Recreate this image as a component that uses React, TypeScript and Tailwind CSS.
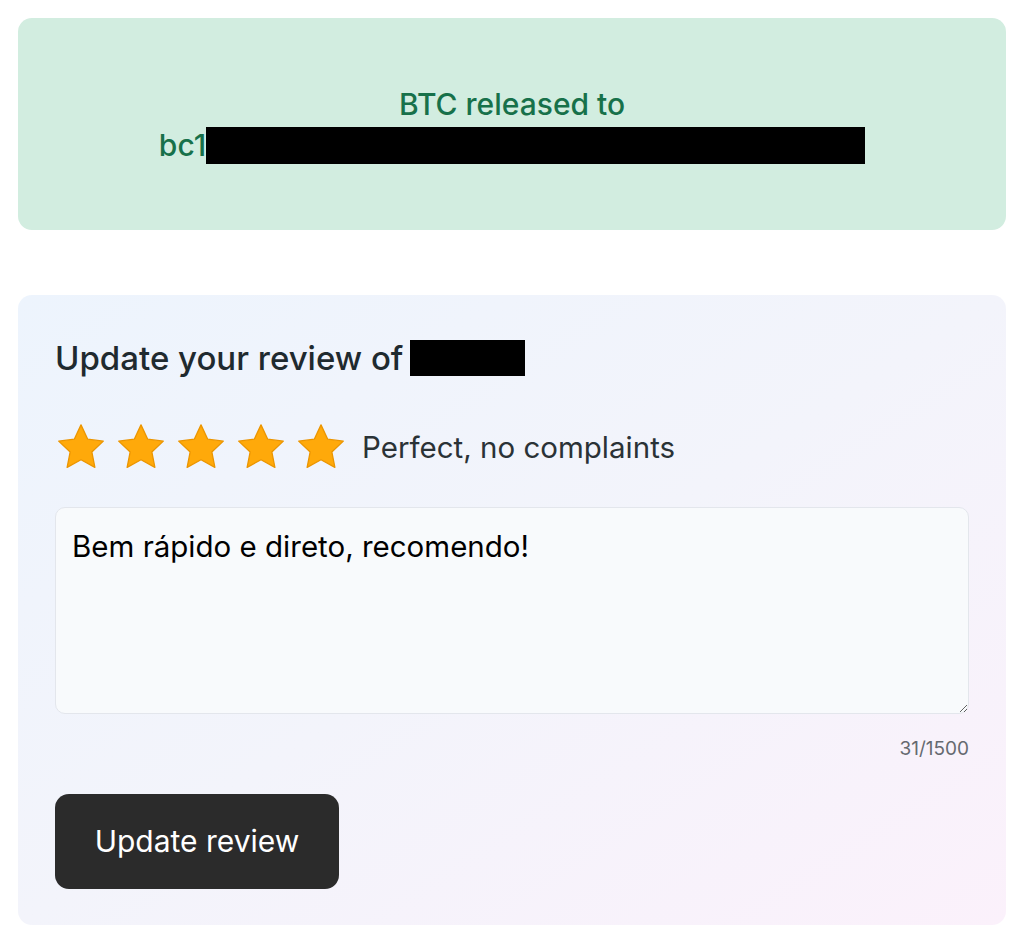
import { useState } from 'react'

function StarIcon() {
  return (
    <svg viewBox="0 0 24 24" className="w-[52px] h-[52px]">
      <path
        d="M12 1.8l3.1 6.6 7.2.9-5.3 5 1.4 7.1L12 17.9l-6.4 3.5L7 14.3l-5.3-5 7.2-.9z"
        fill="#ffa90a"
        stroke="#eb9500"
        strokeWidth="0.6"
        strokeLinejoin="round"
      />
    </svg>
  )
}

export default function App() {
  const [text, setText] = useState('Bem rápido e direto, recomendo!')

  return (
    <div className="min-h-[937px] bg-white px-[18px] pt-[18px] font-['Inter',sans-serif]">
      {/* Released banner */}
      <div className="h-[212px] rounded-[14px] bg-[#d2ede0] flex items-center justify-center">
        <div className="text-center text-[30px] leading-[41px] text-[#17714a] font-medium pt-[2px]">
          <div>BTC released to</div>
          <div className="flex items-center">
            bc1
            <span className="inline-block w-[659px] h-[37px] bg-black" />
          </div>
        </div>
      </div>

      {/* Review card */}
      <div className="mt-[65px] h-[630px] rounded-[14px] bg-gradient-to-br from-[#edf4fd] via-[#f3f4fb] to-[#fbf1fb] px-[37px] pt-[40px]">
        <h2 className="flex items-center text-[33px] leading-[46px] font-medium text-[#1f2a2f]">
          Update your review of
          <span className="ml-[7px] inline-block w-[115px] h-[36px] bg-black" />
        </h2>

        <div className="mt-[40px] flex items-center">
          <div className="flex gap-[8px]">
            {[0, 1, 2, 3, 4].map((i) => (
              <StarIcon key={i} />
            ))}
          </div>
          <span className="ml-[15px] text-[29.5px] text-[#2a3236]">Perfect, no complaints</span>
        </div>

        <textarea
          value={text}
          onChange={(e) => setText(e.target.value)}
          className="mt-[34px] block w-full h-[207px] rounded-[10px] border border-[#e3e6ec] bg-[#f8fafc] px-[16px] py-[22px] text-[29.5px] leading-[32px] text-black outline-none"
        />
        <div className="mt-[21px] text-right text-[19px] text-[#666a70]">{text.length}/1500</div>

        <button className="mt-[30px] w-[284px] h-[95px] rounded-[14px] bg-[#2b2b2b] text-white text-[30px]">
          Update review
        </button>
      </div>
    </div>
  )
}
